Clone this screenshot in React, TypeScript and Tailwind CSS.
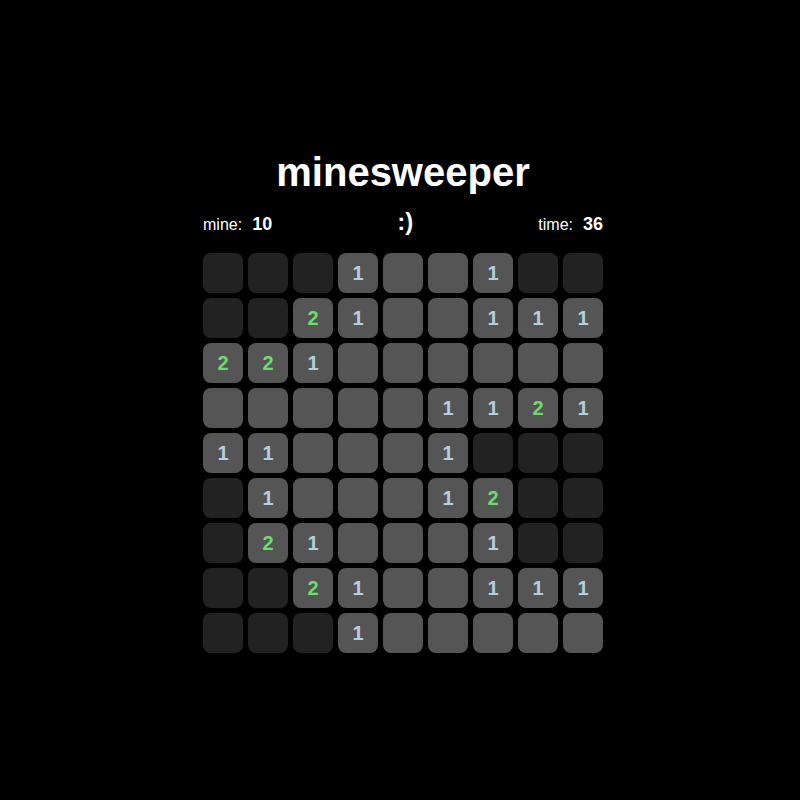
const BOARD = [
  "DDD1RR1DD",
  "DD21RR111",
  "221RRRRRR",
  "RRRRR1121",
  "11RRR1DDD",
  "D1RRR12DD",
  "D21RRR1DD",
  "DD21RR111",
  "DDD1RRRRR",
];

function Cell({ v }: { v: string }) {
  if (v === "D") return <div className="h-10 w-10 rounded-lg bg-[#222222]" />;
  const color = v === "1" ? "text-[#b4d0e0]" : "text-[#6ddc6d]";
  return (
    <div className={`flex h-10 w-10 items-center justify-center rounded-lg bg-[#555555] text-xl font-bold ${v === "R" ? "" : color}`}>
      {v === "R" ? "" : v}
    </div>
  );
}

export default function App() {
  return (
    <div className="min-h-screen bg-black text-white pt-[149px] pl-[6px] font-['Liberation_Sans',Arial,sans-serif]">
      <div className="mx-auto flex w-[400px] flex-col">
        <h1 className="text-center text-[40px] font-bold leading-[46px]">minesweeper</h1>
        <div className="mt-[11px] flex h-[33px] items-baseline justify-between">
          <div className="flex items-baseline gap-[10px]">
            <span className="text-base">mine:</span>
            <span className="text-lg font-bold">10</span>
          </div>
          <span className="text-2xl font-bold">:)</span>
          <div className="flex items-baseline gap-[10px]">
            <span className="text-base">time:</span>
            <span className="text-lg font-bold">36</span>
          </div>
        </div>
        <div className="mt-[14px] grid grid-cols-9 gap-[5px]">
          {BOARD.map((row, r) => row.split("").map((v, c) => <Cell key={`${r}-${c}`} v={v} />))}
        </div>
      </div>
    </div>
  );
}
